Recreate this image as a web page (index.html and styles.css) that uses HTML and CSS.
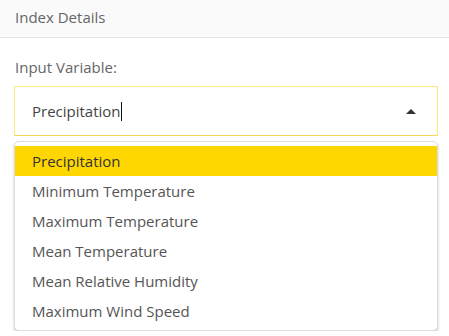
FILE: index.html
```html
<!DOCTYPE html>
<html>
<head>
<meta charset="utf-8">
<link rel="stylesheet" href="styles.css">
</head>
<body>
<div class="header">Index Details</div>
<div class="content">
  <div class="label">Input Variable:</div>
  <div class="select">
    <span class="value">Precipitation</span><span class="caret"></span>
    <span class="arrow"></span>
  </div>
  <ul class="menu">
    <li class="item active">Precipitation</li>
    <li class="item">Minimum Temperature</li>
    <li class="item">Maximum Temperature</li>
    <li class="item">Mean Temperature</li>
    <li class="item">Mean Relative Humidity</li>
    <li class="item">Maximum Wind Speed</li>
  </ul>
</div>
</body>
</html>
```
FILE: styles.css
```css
html, body {
  margin: 0;
  padding: 0;
  background: #ffffff;
  font-family: "Open Sans", "Noto Sans", sans-serif;
  font-size: 15px;
  overflow: hidden;
}
.header {
  height: 37px;
  line-height: 35px;
  padding-left: 15px;
  background: #fafafa;
  border-bottom: 1px solid #e6e6e6;
  color: #666666;
}
.content {
  padding: 0 11px 0 14px;
}
.label {
  margin-top: 19px;
  line-height: 20px;
  padding-left: 1px;
  color: #666666;
}
.select {
  margin-top: 9px;
  height: 50px;
  box-sizing: border-box;
  border: 1px solid #ffe97a;
  border-bottom-color: #f2d95e;
  display: flex;
  align-items: center;
  padding-left: 17px;
  position: relative;
  color: #444444;
}
.value {
  line-height: 20px;
}
.caret {
  display: inline-block;
  width: 0;
  height: 19px;
  border-left: 1px solid #111111;
  margin-left: 0;
}
.arrow {
  position: absolute;
  right: 21px;
  top: 22px;
  width: 0;
  height: 0;
  border-left: 5px solid transparent;
  border-right: 5px solid transparent;
  border-bottom: 5px solid #333333;
}
.menu {
  list-style: none;
  margin: 5px 0 0 0;
  padding: 4px 0 4px 0;
  border: 1px solid #dddddd;
  border-radius: 5px;
  box-shadow: 0 2px 3px rgba(0, 0, 0, 0.22);
  background: #ffffff;
}
.item {
  height: 30px;
  line-height: 30px;
  padding-left: 17px;
  color: #555555;
}
.item.active {
  background: #ffd700;
  color: #333333;
}
```
